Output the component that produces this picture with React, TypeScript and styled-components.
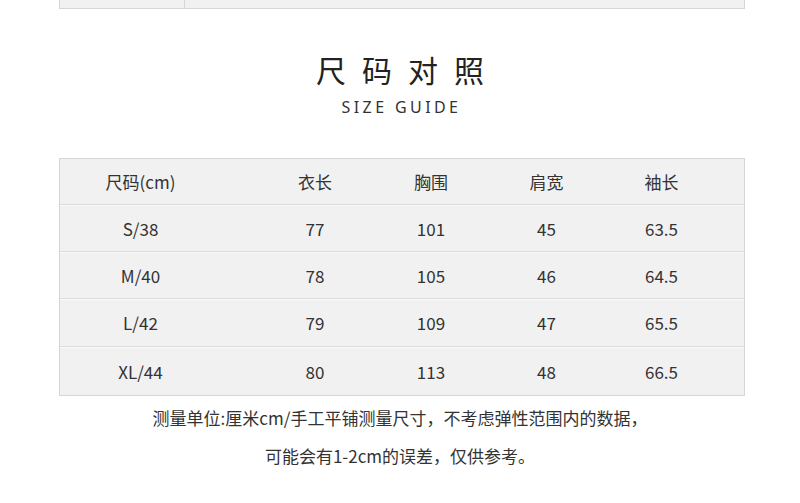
import styled, { createGlobalStyle } from "styled-components";

const GlobalStyle = createGlobalStyle`
  html, body {
    margin: 0;
    padding: 0;
    background: #fff;
  }
  body {
    font-family: "Noto Sans CJK SC", "Noto Sans", sans-serif;
    color: #333;
  }
`;

const Page = styled.div`
  width: 800px;
  height: 503px;
  overflow: hidden;
  display: flex;
  flex-direction: column;
  align-items: center;
`;

const PrevTable = styled.div`
  align-self: flex-start;
  margin-left: 59px;
  width: 686px;
  height: 9px;
  display: grid;
  grid-template-columns: 125px 1fr;
  background: #f1f1f1;
  border: 1px solid #d6d6d6;
  border-top: none;
  box-sizing: border-box;
`;

const PrevCell = styled.div`
  border-right: 1px solid #d6d6d6;
`;

const Title = styled.h1`
  margin: 45px 0 0;
  padding-left: 16px;
  font-size: 30px;
  line-height: 30px;
  font-weight: 400;
  letter-spacing: 16px;
  color: #222;
`;

const Subtitle = styled.div`
  margin-top: 13px;
  padding-left: 3px;
  font-family: "Noto Sans", sans-serif;
  font-size: 16px;
  line-height: 20px;
  letter-spacing: 3.4px;
  color: #333;
`;

const Table = styled.div`
  align-self: flex-start;
  margin: 41px 0 0 59px;
  width: 686px;
  box-sizing: border-box;
  border: 1px solid #d6d6d6;
  background: #f1f1f1;
`;

const Row = styled.div<{ $first?: boolean; $h: number }>`
  display: grid;
  grid-template-columns: 197px 116px 116px 115px 115px;
  padding-right: 25px;
  height: ${(p) => p.$h}px;
  align-items: center;
  border-top: ${(p) => (p.$first ? "none" : "1px solid #dcdcdc")};
  box-shadow: ${(p) => (p.$first ? "none" : "inset 0 1px 0 #fafafa")};
`;

const Cell = styled.div<{ $lead?: boolean }>`
  text-align: center;
  font-size: 17px;
  color: #333;
  padding-right: ${(p) => (p.$lead ? "36px" : "0")};
`;

const Notes = styled.div`
  margin-top: 3px;
  text-align: center;
  font-size: 17px;
  line-height: 38px;
  color: #333;
`;

const head = ["尺码(cm)", "衣长", "胸围", "肩宽", "袖长"];
const rows = [
  ["S/38", "77", "101", "45", "63.5"],
  ["M/40", "78", "105", "46", "64.5"],
  ["L/42", "79", "109", "47", "65.5"],
  ["XL/44", "80", "113", "48", "66.5"],
];
const heights = [45, 46, 46, 47, 48];

export default function App() {
  return (
    <Page>
      <GlobalStyle />
      <PrevTable>
        <PrevCell />
        <div />
      </PrevTable>
      <Title>尺码对照</Title>
      <Subtitle>SIZE GUIDE</Subtitle>
      <Table>
        <Row $first $h={heights[0]}>
          {head.map((h, i) => (
            <Cell key={h} $lead={i === 0}>
              {h}
            </Cell>
          ))}
        </Row>
        {rows.map((r, ri) => (
          <Row key={r[0]} $h={heights[ri + 1]}>
            {r.map((v, i) => (
              <Cell key={i} $lead={i === 0}>
                {v}
              </Cell>
            ))}
          </Row>
        ))}
      </Table>
      <Notes>
        测量单位:厘米cm/手工平铺测量尺寸，不考虑弹性范围内的数据，
        <br />
        可能会有1-2cm的误差，仅供参考。
      </Notes>
    </Page>
  );
}
